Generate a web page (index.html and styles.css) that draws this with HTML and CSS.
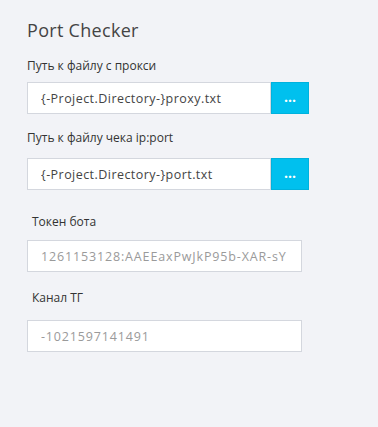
FILE: index.html
```html
<!DOCTYPE html>
<html lang="en">
<head>
    <meta charset="UTF-8">
    <meta name="viewport" content="width=device-width, initial-scale=1.0">
    <title>Port Checker</title>
    <link rel="stylesheet" href="styles.css">
</head>
<body>
    <div class="panel">
        <h1 class="title">Port Checker</h1>

        <div class="field field-proxy">
            <label class="label">Путь к файлу с прокси</label>
            <div class="row">
                <input class="input" type="text" value="{-Project.Directory-}proxy.txt" readonly>
                <button class="browse">...</button>
            </div>
        </div>

        <div class="field field-port">
            <label class="label">Путь к файлу чека ip:port</label>
            <div class="row">
                <input class="input" type="text" value="{-Project.Directory-}port.txt" readonly>
                <button class="browse">...</button>
            </div>
        </div>

        <div class="field field-token">
            <label class="label label-indent">Токен бота</label>
            <input class="input input-wide input-muted" type="text" value="1261153128:AAEEaxPwJkP95b-XAR-sY" readonly>
        </div>

        <div class="field field-channel">
            <label class="label label-indent">Канал ТГ</label>
            <input class="input input-wide input-muted" type="text" value="-1021597141491" readonly>
        </div>
    </div>
</body>
</html>
```

FILE: styles.css
```css
body {
    margin: 0;
    background: #f2f3f7;
    font-family: "Open Sans", Arial, sans-serif;
    color: #333;
}

.panel {
    padding: 18px 0 0 27px;
    display: flex;
    flex-direction: column;
}

.title {
    margin: 0;
    font-size: 18px;
    font-weight: 400;
    line-height: 24px;
    letter-spacing: 0.3px;
    color: #444;
}

.field {
    display: flex;
    flex-direction: column;
}

.field-proxy { margin-top: 16px; gap: 8px; }
.field-port { margin-top: 16px; gap: 12px; }
.field-token { margin-top: 24px; gap: 10px; }
.field-channel { margin-top: 18px; gap: 14px; }

.label {
    font-size: 12px;
    line-height: 16px;
    color: #333;
}

.label-indent {
    padding-left: 5px;
}

.row {
    display: flex;
}

.input {
    box-sizing: border-box;
    width: 244px;
    height: 32px;
    margin: 0;
    padding: 0 13px;
    border: 1px solid #d4d7de;
    background: #fff;
    font-family: inherit;
    font-size: 12.5px;
    letter-spacing: 0.45px;
    color: #444;
    outline: none;
}

.input-wide {
    width: 275px;
}

.input-muted {
    letter-spacing: 0.85px;
    color: #9a9a9a;
}

.browse {
    box-sizing: border-box;
    width: 38px;
    height: 32px;
    margin: 0;
    padding: 0 0 4px;
    border: 1px solid #00b2dd;
    background: #00c0ee;
    color: #fff;
    font-family: inherit;
    font-size: 14px;
    font-weight: 700;
    cursor: pointer;
}
```
